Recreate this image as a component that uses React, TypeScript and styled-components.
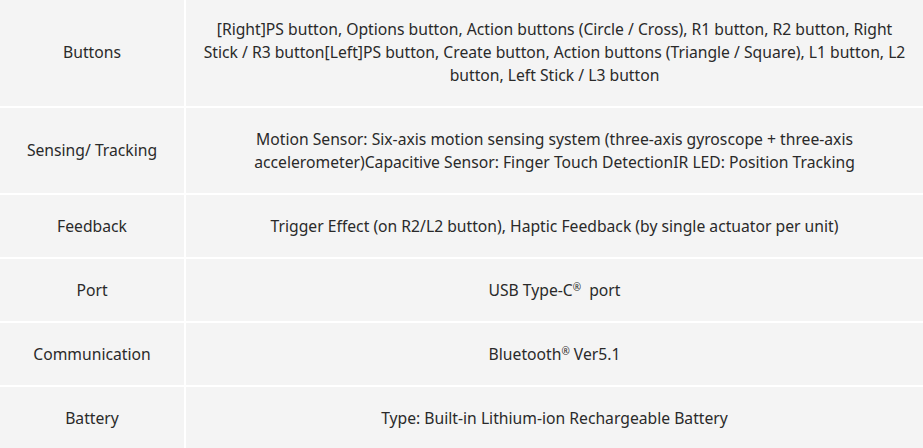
import React from 'react'
import styled, { createGlobalStyle } from 'styled-components'

const GlobalStyle = createGlobalStyle`
  html, body {
    margin: 0;
    padding: 0;
    background: #ffffff;
  }
  body {
    font-family: 'Noto Sans', 'Open Sans', Arial, sans-serif;
  }
`

const SpecTable = styled.div`
  display: grid;
  grid-template-columns: 184px 1fr;
  gap: 2px;
  margin-top: -2px;
  width: 923px;
  background: #ffffff;
`

const Cell = styled.div`
  display: flex;
  align-items: center;
  justify-content: center;
  text-align: center;
  background: #f4f4f4;
  color: #2a2a2a;
  font-size: 15.7px;
  line-height: 23px;
  padding: 19.5px 0;
`

const LabelCell = styled(Cell)`
  padding-left: 6px;
  padding-right: 6px;
`

const ValueCell = styled(Cell)`
  padding-left: 16px;
  padding-right: 16px;
`

const Reg = styled.span`
  font-size: 10px;
  line-height: 0;
  vertical-align: 5px;
`

interface Spec {
  label: string
  value: React.ReactNode
}

const specs: Spec[] = [
  {
    label: 'Buttons',
    value:
      '[Right]PS button, Options button, Action buttons (Circle / Cross), R1 button, R2 button, Right Stick / R3 button[Left]PS button, Create button, Action buttons (Triangle / Square), L1 button, L2 button, Left Stick / L3 button'
  },
  {
    label: 'Sensing/ Tracking',
    value:
      'Motion Sensor: Six-axis motion sensing system (three-axis gyroscope + three-axis accelerometer)Capacitive Sensor: Finger Touch DetectionIR LED: Position Tracking'
  },
  {
    label: 'Feedback',
    value: 'Trigger Effect (on R2/L2 button), Haptic Feedback (by single actuator per unit)'
  },
  {
    label: 'Port',
    value: (
      <span>
        USB Type-C<Reg>®</Reg>&nbsp; port
      </span>
    )
  },
  {
    label: 'Communication',
    value: (
      <span>
        Bluetooth<Reg>®</Reg> Ver5.1
      </span>
    )
  },
  {
    label: 'Battery',
    value: 'Type: Built-in Lithium-ion Rechargeable Battery'
  }
]

export default function App() {
  return (
    <>
      <GlobalStyle />
      <SpecTable>
        {specs.map((spec, index) => (
          <React.Fragment key={index}>
            <LabelCell>{spec.label}</LabelCell>
            <ValueCell>{spec.value}</ValueCell>
          </React.Fragment>
        ))}
      </SpecTable>
    </>
  )
}
